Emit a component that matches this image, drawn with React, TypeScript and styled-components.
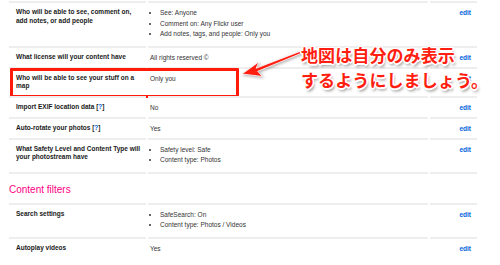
import React from 'react';
import styled, { createGlobalStyle } from 'styled-components';

const GlobalStyle = createGlobalStyle`
  html, body {
    margin: 0;
    padding: 0;
    background: #fff;
  }
  body {
    font-family: "Liberation Sans", Arial, sans-serif;
    color: #222;
  }
`;

const Page = styled.div`
  position: relative;
  width: 500px;
  height: 265px;
  overflow: hidden;
  box-sizing: border-box;
  padding: 1px 0 0 9px;
`;

const Table = styled.div`
  width: 468px;
`;

const Row = styled.div<{ $last?: boolean }>`
  position: relative;
  display: grid;
  grid-template-columns: 137px 280px 47px;
  column-gap: 2px;

  & > div {
    border-top: 2px solid #eeeeee;
    border-bottom: ${p => (p.$last ? '2px solid #eeeeee' : 'none')};
  }
`;

const Label = styled.div`
  padding: 5px 4px 5px 7px;
  font-size: 6.5px;
  line-height: 8.5px;
  font-weight: bold;
  color: #1a1a1a;
`;

const Value = styled.div`
  padding: 5px 2px 5px 2px;
  font-size: 6.5px;
  line-height: 9px;
  color: #333;
`;

const Bullets = styled.ul`
  margin: 0;
  padding: 0 0 1px 10px;
  line-height: 10.5px;
`;

const Action = styled.div`
  padding: 5px 6px 5px 0;
  text-align: right;
  font-size: 6.5px;
  line-height: 9px;
  font-weight: bold;
  color: #0063dc;
`;

const Help = styled.span`
  color: #0063dc;
`;

const SectionTitle = styled.h2`
  margin: 10px 0 7px;
  font-size: 10px;
  line-height: 12px;
  font-weight: normal;
  color: #ff0084;
`;

// red annotation frame drawn over the map row
const Highlight = styled.span`
  position: absolute;
  left: 1px;
  top: 1px;
  width: 229px;
  height: 30px;
  box-sizing: border-box;
  border: 3px solid #ff1a0a;
  border-radius: 1px;
  pointer-events: none;
`;

const Callout = styled.div`
  position: absolute;
  z-index: 2;
  left: 301px;
  top: 42px;
  font-family: "Noto Sans CJK JP", sans-serif;
  font-weight: bold;
  font-size: 17px;
  line-height: 25px;
  letter-spacing: 0.1px;
  color: #ff1e10;
  white-space: nowrap;
  text-shadow:
    1.5px 0 0 #fff, -1.5px 0 0 #fff, 0 1.5px 0 #fff, 0 -1.5px 0 #fff,
    1px 1px 0 #fff, -1px -1px 0 #fff, 1px -1px 0 #fff, -1px 1px 0 #fff,
    1.5px 2.5px 3px rgba(0, 0, 0, 0.45);
`;

const Arrow = styled.svg`
  position: absolute;
  z-index: 2;
  left: 236px;
  top: 46px;
  overflow: visible;
  filter: drop-shadow(1px 1.5px 1.5px rgba(0, 0, 0, 0.35));
`;

type Item = {
  label: React.ReactNode;
  value?: string;
  bullets?: string[];
};

const privacy: Item[] = [
  {
    label: 'Who will be able to see, comment on, add notes, or add people',
    bullets: ['See: Anyone', 'Comment on: Any Flickr user', 'Add notes, tags, and people: Only you'],
  },
  { label: 'What license will your content have', value: 'All rights reserved ©' },
  { label: 'Who will be able to see your stuff on a map', value: 'Only you' },
  {
    label: (
      <>
        Import EXIF location data [<Help>?</Help>]
      </>
    ),
    value: 'No',
  },
  {
    label: (
      <>
        Auto-rotate your photos [<Help>?</Help>]
      </>
    ),
    value: 'Yes',
  },
  {
    label: 'What Safety Level and Content Type will your photostream have',
    bullets: ['Safety level: Safe', 'Content type: Photos'],
  },
];

const filters: Item[] = [
  { label: 'Search settings', bullets: ['SafeSearch: On', 'Content type: Photos / Videos'] },
  { label: 'Autoplay videos', value: 'Yes' },
];

const renderValue = (item: Item) =>
  item.bullets ? (
    <Bullets>
      {item.bullets.map(b => (
        <li key={b}>{b}</li>
      ))}
    </Bullets>
  ) : (
    item.value
  );

const App: React.FC = () => {
  return (
    <Page>
      <GlobalStyle />
      <Table>
        {privacy.map((item, i) => (
          <Row key={i} $last={i === privacy.length - 1}>
            <Label>{item.label}</Label>
            <Value>{renderValue(item)}</Value>
            <Action>edit</Action>
            {i === 2 && <Highlight />}
          </Row>
        ))}
      </Table>

      <SectionTitle>Content filters</SectionTitle>

      <Table>
        {filters.map((item, i) => (
          <Row key={i}>
            <Label>{item.label}</Label>
            <Value>{renderValue(item)}</Value>
            <Action>edit</Action>
          </Row>
        ))}
      </Table>

      <Arrow width="70" height="40" viewBox="0 0 70 40">
        <path
          d="M64.5 5.2 L20.2 22.2 L22.8 15.9 L6 28 L26.4 30.4 L21.7 25.3 L65.5 7.2 Z"
          fill="#ff1e10"
          stroke="#fff"
          strokeWidth="0.8"
          strokeLinejoin="round"
        />
      </Arrow>

      <Callout>
        地図は自分のみ表示
        <br />
        するようにしましょう。
      </Callout>
    </Page>
  );
};

export default App;
